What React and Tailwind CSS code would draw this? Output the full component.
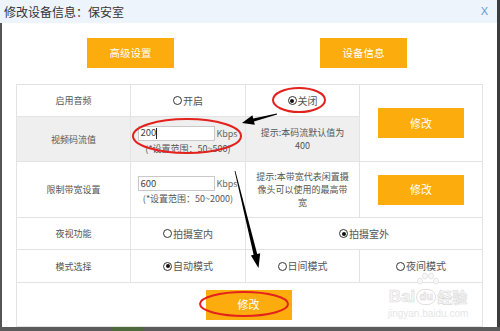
import React from "react";

function Radio({ checked }) {
  return (
    <span className="relative inline-block w-[9px] h-[9px] rounded-full border border-[#333] bg-white mr-[1px] shrink-0">
      {checked && <span className="absolute left-[1.5px] top-[1.5px] w-[4px] h-[4px] rounded-full bg-[#111]" />}
    </span>
  );
}

function RadioLabel({ checked, label }) {
  return (
    <span className="flex items-center text-[10px] leading-none text-[#555]">
      <Radio checked={checked} />
      {label}
    </span>
  );
}

function OrangeBtn({ children, cls = "" }) {
  return (
    <div className={"w-[86px] h-[30px] bg-[#fcac0c] text-white flex items-center justify-center text-[11px] leading-none " + cls}>
      {children}
    </div>
  );
}

function InputBlock({ value, range, caret }) {
  return (
    <div className="flex flex-col items-center">
      <div className="flex items-center">
        <div className="w-[77px] h-[15px] bg-white border border-[#c9c9c9] flex items-center pl-[1px] text-[9.5px] leading-none text-[#444]">
          {value}
          {caret && <span className="inline-block w-px h-[11px] bg-[#222]" />}
        </div>
        <span className="ml-[1px] text-[9px] leading-none text-[#666]">Kbps</span>
      </div>
      <div className="mt-[3px] text-[9px] leading-none text-[#555]">{range}</div>
    </div>
  );
}

export default function App() {
  const cell = "bg-white flex items-center justify-center text-[9px] text-[#555]";
  const gray = "bg-[#efefef] flex items-center justify-center text-[9px] text-[#555]";
  return (
    <div className="relative w-[500px] h-[331px] overflow-hidden bg-white flex flex-col font-['Noto_Sans_CJK_SC','Noto_Sans',sans-serif]">
      <div className="flex flex-1 min-h-0">
        <div className="flex-1 flex flex-col min-w-0">
          <div className="h-[23px] shrink-0 bg-[#eef4fc] flex items-center justify-between pl-[4px] pr-[9px]">
            <span className="text-[12px] leading-none text-[#333]">修改设备信息：保安室</span>
            <span className="text-[11px] leading-none text-[#5f9bd8] font-['Liberation_Sans',sans-serif]">X</span>
          </div>
          <div className="flex-1 border-l-2 border-[#555] flex flex-col">
            <div className="flex pt-[15px]">
              <div className="ml-[85px] w-[87px] h-[30px] bg-[#fcac0c] text-white flex items-center justify-center text-[10.5px] leading-none">高级设置</div>
              <div className="ml-[146px] w-[87px] h-[30px] bg-[#fcac0c] text-white flex items-center justify-center text-[10.5px] leading-none">设备信息</div>
            </div>
            <div className="mt-[16px] ml-[14px] w-[467px] grid grid-cols-[113px_114px_113px_122px] grid-rows-[31px_44px_55px_31px_32px_43px] gap-px bg-[#e3e3e3] border border-[#e3e3e3]">
              {/* row 1 */}
              <div className={cell}><span className="leading-none">启用音频</span></div>
              <div className={cell}><RadioLabel label="开启" /></div>
              <div className={cell}><RadioLabel checked label="关闭" /></div>
              <div className={cell + " row-span-2"}><OrangeBtn>修改</OrangeBtn></div>
              {/* row 2 */}
              <div className={gray}><span className="leading-none">视频码流值</span></div>
              <div className={gray}><InputBlock value="200" caret range="(*设置范围：50~500)" /></div>
              <div className={gray}>
                <span className="block text-center leading-[13px]">提示:本码流默认值为<br />400</span>
              </div>
              {/* row 3 */}
              <div className={cell}><span className="leading-none">限制带宽设置</span></div>
              <div className={cell}><InputBlock value="600" range="(*设置范围：50~2000)" /></div>
              <div className={cell}>
                <span className="block text-center leading-[13px]">提示:本带宽代表闲置摄<br />像头可以使用的最高带<br />宽</span>
              </div>
              <div className={cell}><OrangeBtn>修改</OrangeBtn></div>
              {/* row 4 */}
              <div className={cell}><span className="leading-none">夜视功能</span></div>
              <div className={cell}><RadioLabel label="拍摄室内" /></div>
              <div className={cell + " col-span-2"}><RadioLabel checked label="拍摄室外" /></div>
              {/* row 5 */}
              <div className={cell}><span className="leading-none">模式选择</span></div>
              <div className={cell}><RadioLabel checked label="自动模式" /></div>
              <div className={cell}><RadioLabel label="日间模式" /></div>
              <div className={cell}><RadioLabel label="夜间模式" /></div>
              {/* row 6 */}
              <div className={cell + " col-span-4"}><OrangeBtn cls="-translate-x-[1px]">修改</OrangeBtn></div>
            </div>
          </div>
        </div>
        <div className="w-[3px] bg-[#3c3c3c]" />
      </div>
      <div className="h-[4px] shrink-0 bg-[#5b5b5b] flex">
        <div className="ml-[112px] w-[31px] bg-[#4e6a3c]" />
      </div>

      {/* watermark */}
      <div className="absolute left-[382px] top-[272px] w-[92px] flex flex-col items-center pointer-events-none">
        <svg width="26" height="16" viewBox="0 0 26 16">
          <g fill="#f7f7f7" stroke="#e0e0e0" strokeWidth="0.8">
            <ellipse cx="5" cy="9" rx="2.5" ry="3" />
            <ellipse cx="10" cy="4" rx="2.5" ry="3" />
            <ellipse cx="16" cy="4" rx="2.5" ry="3" />
            <ellipse cx="21" cy="9" rx="2.5" ry="3" />
          </g>
        </svg>
        <div className="flex items-center text-[#f8f8f8] [-webkit-text-stroke:0.6px_#dadada] font-['Liberation_Sans',sans-serif] font-bold leading-none">
          <span className="text-[17px]">Bai</span>
          <span className="mx-[1px] w-[20px] h-[16px] rounded-full border border-[#e0e0e0] flex items-center justify-center text-[11px]">du</span>
          <span className="text-[15px] font-['Noto_Sans_CJK_SC',sans-serif]">经验</span>
        </div>
        <div className="mt-[4px] text-[10px] leading-none text-[#e6e6e6] font-['Liberation_Sans',sans-serif]">jingyan.baidu.com</div>
      </div>

      {/* annotations */}
      <svg className="absolute left-0 top-0 pointer-events-none" width="500" height="331" viewBox="0 0 500 331">
        <g fill="none" stroke="#e3211d" strokeWidth="2">
          <ellipse cx="299" cy="100" rx="26" ry="12" />
          <ellipse cx="187" cy="136" rx="54" ry="17" />
          <ellipse cx="244" cy="304" rx="44" ry="12" />
        </g>
        <polygon fill="#000" points="276.9,113.5 253.2,118.5 252.4,115.2 242,123 254.8,124.8 254,121.5 277.1,114.5" />
        <polygon fill="#000" points="234.6,171.1 253.6,254.8 250.9,255.6 258.5,268 260.2,253.2 257.2,254 235.4,170.9" />
      </svg>
    </div>
  );
}
